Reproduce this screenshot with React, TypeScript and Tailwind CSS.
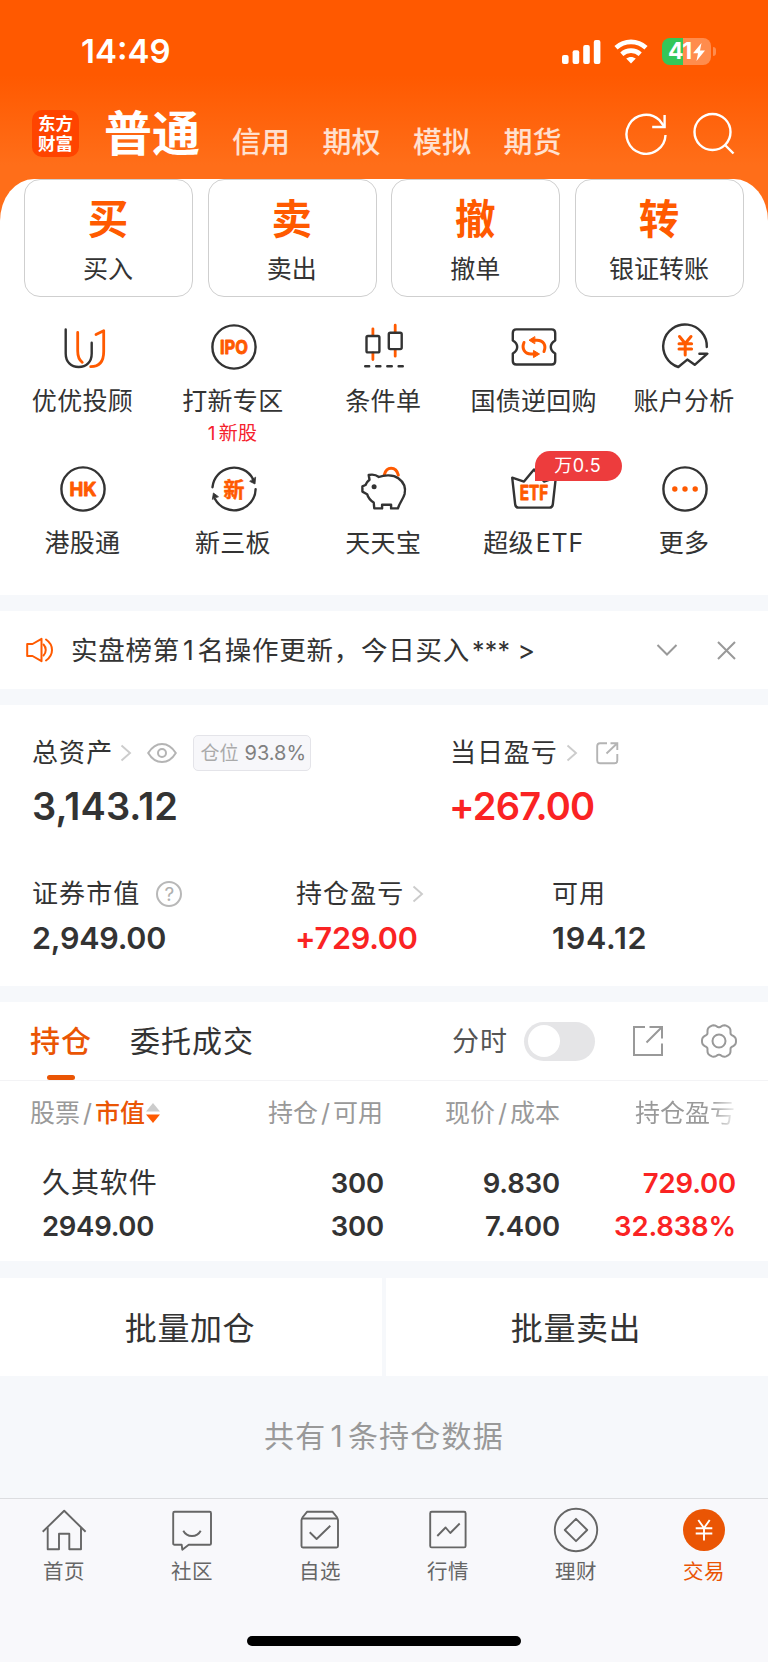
import type { ReactNode } from "react";
import clsx from "clsx";

const DARK = "#333333";
const ORANGE = "#ff5a00";

// ---------- service icons (46 x 46) ----------

function ServiceSvg({ children }: { children: ReactNode }) {
  return (
    <svg
      width="46"
      height="46"
      viewBox="0 0 46 46"
      fill="none"
      stroke={DARK}
      strokeWidth="2.4"
      strokeLinecap="round"
      strokeLinejoin="round"
      className="block overflow-visible"
    >
      {children}
    </svg>
  );
}

function IconText({ children, size, y, width }: { children: string; size: number; y: number; width: number }) {
  return (
    <text
      x="23"
      y={y}
      fontSize={size}
      textAnchor="middle"
      textLength={width}
      lengthAdjust="spacingAndGlyphs"
      fill={ORANGE}
      stroke={ORANGE}
      strokeWidth="0.9"
      className="font-bold"
    >
      {children}
    </text>
  );
}

const AdvisorIcon = () => (
  <ServiceSvg>
    <path d="M5.7 5.5V29.5C5.7 38 11 43 18.7 43S31.7 38 31.7 29.5V18.8" />
    <path d="M17.7 8.5V27C17.7 32.5 19 36 22.3 38.3" stroke={ORANGE} strokeWidth="2.8" />
    <path d="M36 10.6L43.7 6.7V27.5C43.7 37.5 39.5 42.7 30.7 42.7" stroke={ORANGE} strokeWidth="2.8" />
  </ServiceSvg>
);

const IpoIcon = () => (
  <ServiceSvg>
    <circle cx="23" cy="23" r="21.6" />
    <IconText size={19} y={29.6} width={28}>IPO</IconText>
  </ServiceSvg>
);

const CandleIcon = () => (
  <ServiceSvg>
    <path d="M11.900 4.8V11M11.900 29V35.6M34.200 1.2V8M34.200 26V32.2" stroke={ORANGE} strokeWidth="2.8" />
    <rect x="5.500" y="12" width="12.900" height="16.4" rx="1.5" />
    <rect x="27.800" y="8.7" width="12.900" height="16.4" rx="1.5" />
    <path d="M4.200 42.3H8.200M15.200 42.3H19.400M26.300 42.3H30.800M37.600 42.3H41.800" />
  </ServiceSvg>
);

const BondIcon = () => (
  <ServiceSvg>
    <path d="M5.3 5.4H40.7Q44.2 5.4 44.2 8.9V16.5Q39.8 19 39.8 23T44.2 29.5V37Q44.2 40.5 40.7 40.5H5.3Q1.8 40.5 1.8 37V29.5Q6.2 27 6.2 23T1.8 16.5V8.9Q1.8 5.4 5.3 5.4Z" />
    <path d="M13 18.5C10.5 24.5 13.5 30 20 30H24M33 27.5C35.5 21.5 32.5 16.2 26 16.2H22" stroke={ORANGE} strokeWidth="3" />
    <path d="M23.5 12.800L18 16.2L23.5 19.600ZM22.8 26.6L28.500 30L22.8 33.400Z" fill={ORANGE} stroke={ORANGE} strokeWidth="1" />
  </ServiceSvg>
);

const AnalysisIcon = () => (
  <ServiceSvg>
    <path d="M44.8 23A21.8 21.8 0 1 0 16.3 43L25.3 35.6L32.7 40.8L45.4 29.7H37.4" />
    <path d="M17.5 12.5L23.2 19.5L29 12.5M17 19.8H29.6M17 25H29.6M23.2 19.5V31" stroke={ORANGE} strokeWidth="3" />
  </ServiceSvg>
);

const HkIcon = () => (
  <ServiceSvg>
    <circle cx="23" cy="23" r="21.6" />
    <IconText size={19} y={29.6} width={27}>HK</IconText>
  </ServiceSvg>
);

const NewBoardIcon = () => (
  <ServiceSvg>
    <path d="M1.5 21.2A21.6 21.6 0 0 1 42 13M44.6 23.2A21.6 21.6 0 0 1 4 33" />
    <path d="M44.6 11.5L44 18L39 15.5ZM1.4 33L2.4 27L7.2 30.5Z" fill={DARK} strokeWidth="0.8" />
    <text x="23" y="30.5" fontSize="21" textAnchor="middle" fill={ORANGE} stroke={ORANGE} strokeWidth="0.5" className="font-bold">
      新
    </text>
  </ServiceSvg>
);

const PigIcon = () => (
  <ServiceSvg>
    <g transform="translate(-0.9 0)">
      <path d="M24.3 8.6C25.5 3.6 28 2.2 31 2.2S37 4 38.2 9" stroke={ORANGE} strokeWidth="3" />
      <path d="M8.6 9C12 8.2 16 8.8 18.8 11C24 8.8 33 8.4 38.2 12.2C44 16.3 45.8 22 44.5 28C43.2 33 39.5 36.5 37.8 42.4H31V38.8H22V42.4H14.2L13.6 36.5C10.2 34.5 8 31.5 7 28.2L2.3 25.6V20.4L5.4 19C6.2 16.8 7.6 15.2 9.4 13.8Z" />
      <circle cx="14" cy="20.7" r="2.5" fill={DARK} stroke="none" />
    </g>
  </ServiceSvg>
);

const EtfIcon = () => (
  <ServiceSvg>
    <path d="M1.2 11.6L13 15.6L23 3.4L33 15.6L44.8 11.6L41.8 38.5Q41.4 41.6 38.5 41.6H7.5Q4.6 41.6 4.2 38.5Z" />
    <IconText size={19.5} y={34} width={28.5}>ETF</IconText>
  </ServiceSvg>
);

const MoreIcon = () => (
  <ServiceSvg>
    <circle cx="23" cy="23" r="21.6" />
    {[12.8, 23, 33.2].map((x) => (
      <circle key={x} cx={x} cy="23" r="2.7" fill={ORANGE} stroke="none" />
    ))}
  </ServiceSvg>
);

// ---------- small icons ----------

const Arrow = () => (
  <svg width="12" height="18" viewBox="0 0 12 18" fill="none" stroke="#cccccc" strokeWidth="1.9" className="block">
    <path d="M1.5 1.5L10 9L1.5 16.5" />
  </svg>
);

const EyeIcon = () => (
  <svg width="30" height="22" viewBox="0 0 30 22" fill="none" stroke="#b4b4b4" strokeWidth="2" className="block">
    <path d="M1.2 11C5 4.8 9.5 1.9 15 1.9S25 4.8 28.8 11C25 17.2 20.5 20.1 15 20.1S5 17.2 1.2 11Z" />
    <circle cx="15" cy="11" r="4" />
  </svg>
);

const ShareIcon = () => (
  <svg width="24" height="24" viewBox="0 0 24 24" fill="none" stroke="#b4b4b4" strokeWidth="1.9" className="block">
    <path d="M12 2.2H5Q2.2 2.2 2.2 5V19.5Q2.2 22.3 5 22.3H19.5Q22.3 22.3 22.3 19.5V13" />
    <path d="M15.5 2.2H22.3V9M22 2.5L11.5 12.5" />
  </svg>
);

const ShareBigIcon = () => (
  <svg width="32" height="32" viewBox="0 0 32 32" fill="none" stroke="#999999" strokeWidth="2" className="block">
    <path d="M13 2H2V30H30V18.5M17.5 2H30V13.5M29.5 2.5L14.5 17.5" />
  </svg>
);

// six soft teeth around the hub
const gearPath =
  Array.from({ length: 72 }, (_, i) => {
    const a = (i / 72) * Math.PI * 2;
    const r = 15.7 + 1.7 * Math.cos(6 * a) - 0.4 * Math.cos(12 * a);
    return `${i === 0 ? "M" : "L"}${(19 + r * Math.cos(a)).toFixed(2)} ${(19 + r * Math.sin(a)).toFixed(2)}`;
  }).join("") + "Z";

const GearIcon = () => (
  <svg width="38" height="38" viewBox="0 0 38 38" fill="none" stroke="#999999" strokeWidth="2" strokeLinejoin="round" className="block">
    <path d={gearPath} />
    <circle cx="19" cy="19" r="6.5" />
  </svg>
);

// ---------- status bar ----------

function StatusBar() {
  return (
    <div className="flex h-[102px] items-center pl-[81px] pr-[52px] pt-px">
      <span className="flex-1 text-[33px] leading-none font-semibold text-white">14:49</span>
      <svg width="39" height="24" viewBox="0 0 39 24" fill="#ffffff" className="mr-[13px] block">
        <rect x="0" y="15" width="6.6" height="9" rx="2" />
        <rect x="10.6" y="10.3" width="6.6" height="13.7" rx="2" />
        <rect x="21.2" y="5" width="6.6" height="19" rx="2" />
        <rect x="31.8" y="0" width="6.6" height="24" rx="2" />
      </svg>
      <svg width="34" height="25" viewBox="0 0 34 25" fill="none" stroke="#ffffff" strokeWidth="4.6" className="mr-[14px] block">
        <path d="M2 8.8C10.5 .9 23.5 .9 32 8.8" />
        <path d="M7.8 15.2C13 10.4 21 10.4 26.2 15.2" />
        <path d="M17 24.5L12.2 19.6C15 17.3 19 17.3 21.8 19.6Z" fill="#ffffff" stroke="none" />
      </svg>
      <div className="flex items-center">
        <div className="flex h-[27px] w-[49px] items-center justify-center rounded-[8px] bg-[linear-gradient(90deg,#34c759_42%,#ff8c4d_42%)] text-white">
          <span className="text-[23px] leading-none font-bold tracking-[-0.4px]">41</span>
          <svg width="12" height="18" viewBox="0 0 12 18" fill="#ffffff" className="ml-[1px] block">
            <path d="M8.5 0L0 10.3H5L3.5 18L12 7.5H7Z" />
          </svg>
        </div>
        <div className="ml-[2px] h-[9px] w-[3px] rounded-r-full bg-[#ff8c4d]" />
      </div>
    </div>
  );
}

function Header() {
  return (
    <div className="flex h-[77px] items-start pl-8 pr-[32px]">
      <div className="mt-2 flex size-[47px] flex-col items-center justify-center rounded-[10px] bg-[#ff4400] text-[17.500px] leading-[20px] font-bold text-white">
        <span>东方</span>
        <span>财富</span>
      </div>
      <h1 className="ml-[25px] mt-[8px] text-[48px] leading-[48px] font-bold text-white">普通</h1>
      <nav className="ml-[32px] mt-[26px] flex flex-1 gap-[32px] text-[29px] leading-[30px] font-medium text-white/80">
        {["信用", "期权", "模拟", "期货"].map((name) => (
          <span key={name} className="w-[58.5px] whitespace-nowrap">
            {name}
          </span>
        ))}
      </nav>
      <svg width="44" height="44" viewBox="0 0 44 44" fill="none" stroke="#ffffff" strokeWidth="2.4" className="mt-[10px] mr-[24px] block">
        <path d="M41.5 23A19.5 19.5 0 1 1 35.5 8.2L40.3 14.5" />
        <path d="M40.6 3V15H28.2" />
      </svg>
      <svg width="44" height="44" viewBox="0 0 44 44" fill="none" stroke="#ffffff" strokeWidth="2.4" className="mt-[10px] block">
        <circle cx="20.5" cy="20" r="18" />
        <path d="M32.5 32.5L41.5 41.5" />
      </svg>
    </div>
  );
}

// ---------- sheet ----------

const actions = [
  { glyph: "买", label: "买入" },
  { glyph: "卖", label: "卖出" },
  { glyph: "撤", label: "撤单" },
  { glyph: "转", label: "银证转账" },
];

const services = [
  { label: "优优投顾", icon: <AdvisorIcon /> },
  { label: "打新专区", icon: <IpoIcon />, note: { count: 1, unit: "新股" } },
  { label: "条件单", icon: <CandleIcon /> },
  { label: "国债逆回购", icon: <BondIcon /> },
  { label: "账户分析", icon: <AnalysisIcon /> },
  { label: "港股通", icon: <HkIcon /> },
  { label: "新三板", icon: <NewBoardIcon /> },
  { label: "天天宝", icon: <PigIcon /> },
  { label: "超级", latin: "ETF", icon: <EtfIcon />, badge: "万0.5" },
  { label: "更多", icon: <MoreIcon /> },
];

function Services() {
  return (
    <section className="h-[416px] rounded-t-[34px_42px] bg-white">
      <div className="grid grid-cols-4 gap-[14.6px] px-6">
        {actions.map((a) => (
          <div key={a.label} className="flex h-[118px] flex-col items-center rounded-[16px] border border-[#cfcfcf] pt-[19px] pr-px">
            <span className="text-[40.5px] leading-[42px] font-bold text-[#ff5a00]">{a.glyph}</span>
            <span className="mt-[14px] text-[25px] leading-[28px]">{a.label}</span>
          </div>
        ))}
      </div>
      <div className="mt-[27px] grid grid-cols-5 px-2">
        {services.map((s) => (
          <div key={s.label} className="relative flex h-[141.5px] flex-col items-center">
            {s.icon}
            <span className="mt-[17px] pr-[1.5px] text-[25px] leading-[28px] tracking-[0.3px] whitespace-nowrap">
              {s.label}
              {s.latin && <span className="ml-[2px] tracking-[0.8px]">{s.latin}</span>}
            </span>
            {s.note && (
              <span className="mt-[9px] pr-[2px] text-[19px] leading-[20px] tracking-[0.3px] text-[#f5222d]">
                <span className="mr-[3px]">{s.note.count}</span>
                {s.note.unit}
              </span>
            )}
            {s.badge && (
              <span className="absolute -top-[15px] left-[76px] flex h-[30px] w-[87px] items-center justify-center rounded-[15px] rounded-bl-none bg-[#ed3c3d] pr-[2px] text-[18px] leading-none tracking-[0.5px] text-white">
                {s.badge}
              </span>
            )}
          </div>
        ))}
      </div>
    </section>
  );
}

function Notice() {
  return (
    <section className="mt-4 flex h-[78px] items-center bg-white pl-[26px] pr-[32px]">
      <svg width="28" height="26" viewBox="0 0 28 26" fill="none" stroke="#ff5a00" strokeWidth="2" strokeLinejoin="round" className="block">
        <path d="M1.2 7H6.5L15.5 1.8V24.2L6.5 19H1.2Z" />
        <path d="M17.5 7.5C20.5 10.5 20.5 15.5 17.5 18.5M20 2.5C28 8 28 18 20 23.5" strokeLinecap="round" />
      </svg>
      <span className="ml-[17px] flex-1 text-[26.5px] leading-none tracking-[0.75px] whitespace-nowrap">
        实盘榜第<span className="mx-[3px]">1</span>名操作更新，今日买入
        <span className="ml-[2px] text-[25px] tracking-[0.2px]">*** </span>&gt;
      </span>
      <svg width="22" height="14" viewBox="0 0 22 14" fill="none" stroke="#999999" strokeWidth="2" className="mr-[39px] block">
        <path d="M1.5 2L11 11.5L20.5 2" />
      </svg>
      <svg width="19" height="19" viewBox="0 0 19 19" fill="none" stroke="#999999" strokeWidth="2" className="block">
        <path d="M1 1L18 18M18 1L1 18" />
      </svg>
    </section>
  );
}

function Figure({
  label,
  value,
  extra,
  className,
  valueClassName,
}: {
  label: string;
  value: string;
  extra?: ReactNode;
  className?: string;
  valueClassName?: string;
}) {
  return (
    <div className={className}>
      <div className="flex h-[30px] items-center text-[26px] leading-none whitespace-nowrap">
        <span className="tracking-[1.1px]">{label}</span>
        {extra}
      </div>
      <div className={clsx("mt-[14px] text-[30.5px] leading-[30px] font-semibold", valueClassName)}>{value}</div>
    </div>
  );
}

function Assets() {
  return (
    <section className="mt-4 h-[281px] bg-white px-8">
      <div className="flex pt-[29px]">
        <div className="w-[418px]">
          <div className="flex h-[38px] items-center text-[26px] leading-none">
            <span className="tracking-[1.1px]">总资产</span>
            <span className="ml-[7px]">
              <Arrow />
            </span>
            <span className="ml-[15px]">
              <EyeIcon />
            </span>
            <span className="ml-[16px] flex h-[36px] w-[118px] items-center justify-center gap-[6px] rounded-[5px] border border-[#e4e4e9] bg-[#f7f7fa] pl-[2px] text-[19px] text-[#aaaaaa]">
              仓位 <span className="text-[20px] text-[#808080]">93.8%</span>
            </span>
          </div>
          <div className="mt-[15px] text-[38px] leading-[38px] font-semibold tracking-[0.1px]">3,143.12</div>
        </div>
        <div>
          <div className="flex h-[38px] items-center text-[26px] leading-none">
            <span className="tracking-[0.9px]">当日盈亏</span>
            <span className="ml-[8px]">
              <Arrow />
            </span>
            <span className="ml-[17px]">
              <ShareIcon />
            </span>
          </div>
          <div className="mt-[15px] -ml-px text-[38px] leading-[38px] font-semibold tracking-[-0.8px] text-[#fa2323]">+267.00</div>
        </div>
      </div>
      <div className="mt-[54px] flex">
        <Figure
          className="w-[264px]"
          label="证券市值"
          value="2,949.00"
          valueClassName="tracking-[-0.25px]"
          extra={
            <span className="ml-[16px] flex size-[26px] items-center justify-center rounded-full border-2 border-[#b8b8b8] text-[19px] text-[#b0b0b0]">
              ?
            </span>
          }
        />
        <Figure
          className="w-[256px]"
          label="持仓盈亏"
          value="+729.00"
          valueClassName="-ml-px tracking-[-0.2px] text-[#fa2323]"
          extra={
            <span className="ml-[8px]">
              <Arrow />
            </span>
          }
        />
        <Figure label="可用" value="194.12" valueClassName="tracking-[0.8px]" />
      </div>
    </section>
  );
}

function Holdings() {
  return (
    <section className="mt-4 h-[259px] bg-white">
      <div className="flex h-[79px] items-center border-b-[1.5px] border-[#f3f3f5] pr-[30px]">
        <div className="relative flex h-full items-center pl-[30px] text-[30px] font-medium text-[#ea5504]">
          <span className="tracking-[1px]">持仓</span>
          <span className="absolute bottom-0 left-[47px] h-[5.5px] w-[28px] rounded-[2.5px] bg-[#ea5504]" />
        </div>
        <span className="ml-[38px] flex-1 text-[30px] leading-none tracking-[1px]">委托成交</span>
        <span className="text-[27px] leading-none tracking-[1px] text-[#555555]">分时</span>
        <span className="ml-[16px] flex h-[39px] w-[71px] items-center rounded-full bg-[#e5e5e7] pl-1">
          <span className="size-[32px] rounded-full bg-white" />
        </span>
        <span className="ml-[37px]">
          <ShareBigIcon />
        </span>
        <span className="ml-[36px]">
          <GearIcon />
        </span>
      </div>

      <div className="grid h-[64px] grid-cols-[255px_128px_177px_175px] items-center text-right text-[25px] leading-none text-[#999999]">
        <div className="flex items-center pl-[30px] whitespace-nowrap">
          股票<span className="mx-[3px]">/</span>
          <span className="font-medium text-[#ea5504]">市值</span>
          <svg width="14" height="22" viewBox="0 0 14 22" className="ml-px block">
            <path d="M7 1L14 9.5H0Z" fill="#cccccc" />
            <path d="M7 21L14 12.5H0Z" fill="#ff5a00" />
          </svg>
        </div>
        <div className="whitespace-nowrap">
          持仓<span className="mx-[3px]">/</span>可用
        </div>
        <div className="whitespace-nowrap">
          现价<span className="mx-[3px]">/</span>成本
        </div>
        <div className="bg-[linear-gradient(90deg,#999999_86%,#eeeeee_100%)] bg-clip-text py-1 text-transparent">持仓盈亏</div>
      </div>

      <div className="mt-[17px] grid grid-cols-[254px_130px_176px_176px] text-right text-[27.5px] leading-[43px] font-semibold tracking-[-0.15px]">
        <div className="pl-[42px] text-left">
          <div className="text-[28px] font-normal tracking-[0.9px]">久其软件</div>
          <div className="tracking-[-0.3px]">2949.00</div>
        </div>
        <div>
          <div>300</div>
          <div>300</div>
        </div>
        <div>
          <div>9.830</div>
          <div>7.400</div>
        </div>
        <div className="text-[#fa2323]">
          <div>729.00</div>
          <div>32.838%</div>
        </div>
      </div>
    </section>
  );
}

// ---------- bottom tabs ----------

const tabs = [
  {
    label: "首页",
    icon: (
      <>
        <path d="M1.7 24.8L23.2 3.8L44.6 24.8" />
        <path d="M6.7 20.5V42.3H18V26.7H28.3V42.3H40V20.5" />
      </>
    ),
  },
  {
    label: "社区",
    icon: (
      <>
        <path d="M5.5 4.8H40.7Q42 4.8 42 6.2V36.4Q42 37.8 40.7 37.8H19.7L13.3 42.7L12.7 37.8H5.5Q4.2 37.8 4.2 36.4V6.2Q4.2 4.8 5.5 4.8Z" />
        <path d="M14.3 23.7C18 30.7 28 30.7 31.7 23.7" />
      </>
    ),
  },
  {
    label: "自选",
    icon: (
      <>
        <rect x="4.5" y="11.5" width="36.5" height="29" rx="1.5" />
        <path d="M5 11L10 4.8H35.6L40.6 11" />
        <path d="M12.7 25.3L19.6 32L33.3 18.7" />
      </>
    ),
  },
  {
    label: "行情",
    icon: (
      <>
        <rect x="5.2" y="4.8" width="35.4" height="35.6" rx="1.5" />
        <path d="M12.3 29L20.6 20.5L25.3 26L34.7 16.5" />
      </>
    ),
  },
  {
    label: "理财",
    icon: (
      <>
        <circle cx="23" cy="23" r="21.2" />
        <path d="M23 11.8L34.2 23L23 34.2L11.8 23Z" />
      </>
    ),
  },
  {
    label: "交易",
    active: true,
    icon: (
      <>
        <circle cx="23" cy="23" r="21" fill="#ea5504" stroke="none" />
        <path d="M17.3 13L23 21L28.7 13M14.7 21.2H31.3M14.7 26.5H31.3M23 21V33.5" stroke="#ffffff" />
      </>
    ),
  },
];

function TabBar() {
  return (
    <footer className="flex h-[164px] flex-col border-t border-[#dcdde0] bg-[#f8f8fb]">
      <div className="grid grid-cols-6 pt-[8px]">
        {tabs.map((t) => (
          <div key={t.label} className={clsx("flex flex-col items-center", t.active ? "text-[#ea5504]" : "text-[#666666]")}>
            <svg width="46" height="46" viewBox="0 0 46 46" fill="none" stroke="currentColor" strokeWidth="1.9" strokeLinejoin="round" className="block">
              {t.icon}
            </svg>
            <span className="mt-[7.5px] text-[20.5px] leading-[22px] tracking-[0.5px]">{t.label}</span>
          </div>
        ))}
      </div>
      <div className="mx-auto mt-[53.5px] h-[10px] w-[274px] rounded-full bg-black" />
    </footer>
  );
}

export default function App() {
  return (
    <div className="h-[1662px] w-[768px] overflow-hidden bg-[#f6f8fb] font-['Inter','Noto_Sans_CJK_SC',sans-serif] text-[#333333]">
      <div className="bg-[linear-gradient(180deg,#ff5900_0px,#ff5900_75px,#ff6e19_165px,#ff6e19_222px,#ffffff_222px)]">
        <StatusBar />
        <Header />
        <Services />
      </div>
      <Notice />
      <Assets />
      <Holdings />
      <div className="mt-[17px] grid h-[98px] grid-cols-[382px_382px] gap-x-1 text-[32px] leading-none tracking-[0.6px]">
        <button className="flex items-center justify-center bg-white pr-[2px] pt-[3px]">批量加仓</button>
        <button className="flex items-center justify-center bg-white pr-[2px] pt-[3px]">批量卖出</button>
      </div>
      <div className="flex h-[122px] items-center justify-center pb-[3px] text-[30px] leading-none tracking-[1.2px] text-[#999999]">
        共有<span className="mx-[4px]">1</span>条持仓数据
      </div>
      <TabBar />
    </div>
  );
}
